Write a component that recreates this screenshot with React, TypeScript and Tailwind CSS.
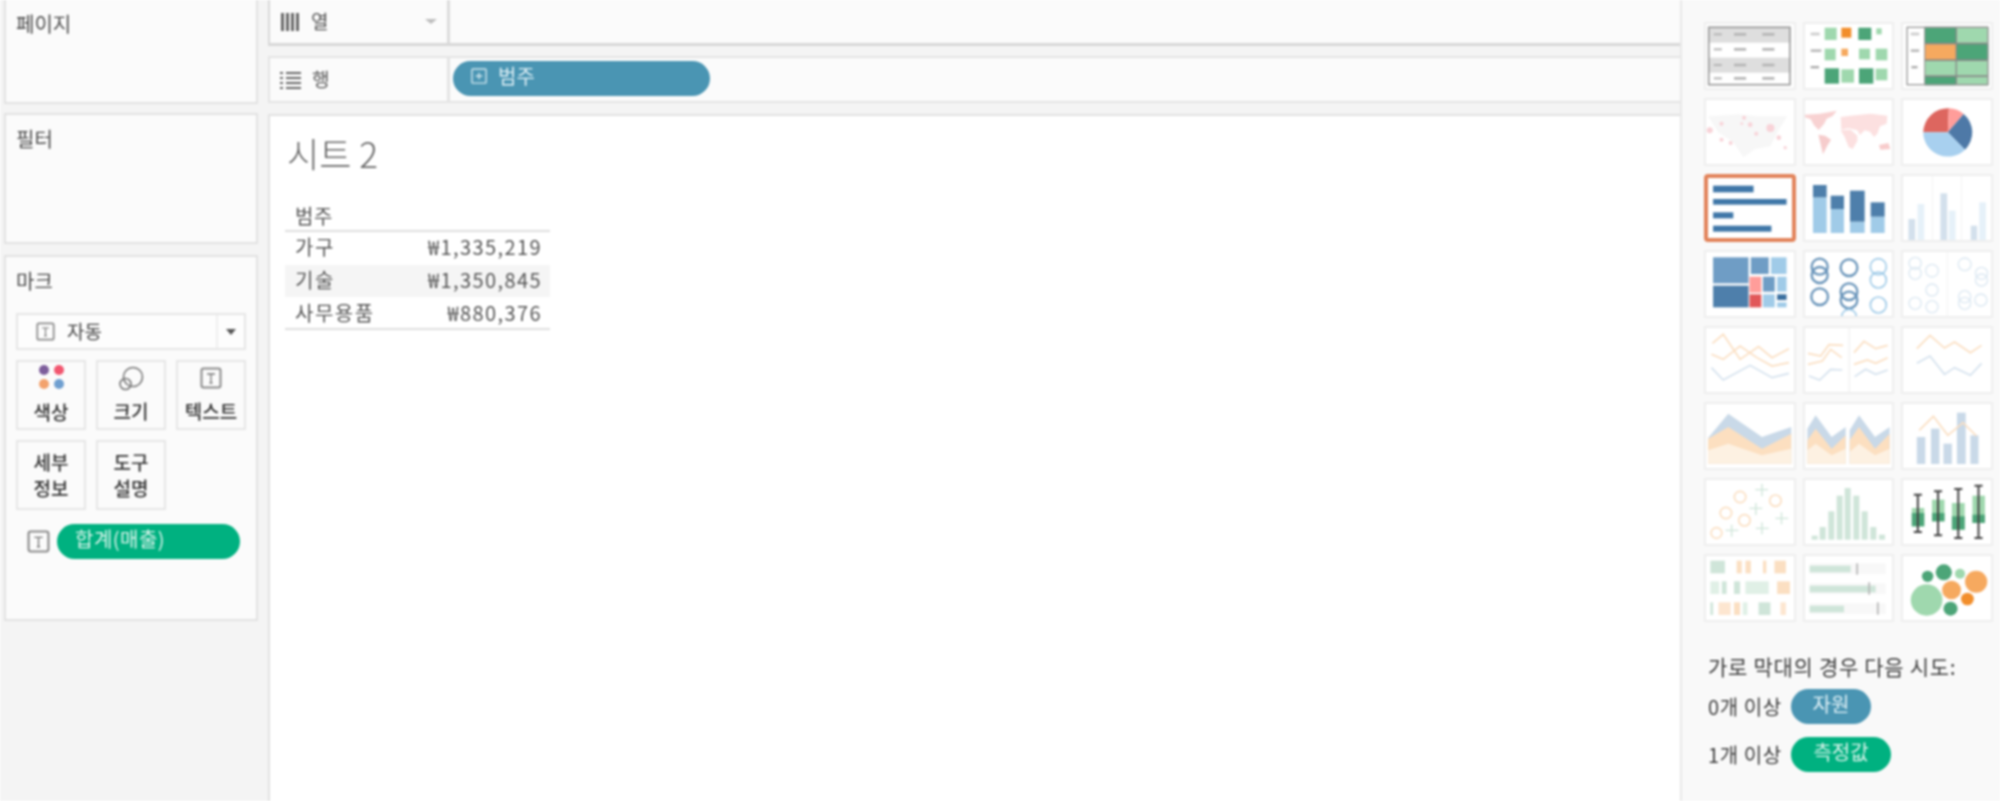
import type { ReactNode } from "react";

const KR = "font-['Noto_Sans_CJK_KR','Noto_Sans',sans-serif]";

function TextIcon({ size = 22 }: { size?: number }) {
  return (
    <svg width={size} height={size} viewBox="0 0 22 22" fill="none">
      <rect x="1.5" y="1.5" width="19" height="19" rx="2" stroke="#8a8a8a" strokeWidth="2" />
      <path d="M7 7h8M11 7v9M9.5 16h3" stroke="#777" strokeWidth="1.3" />
    </svg>
  );
}

function Panel({ title, className, children }: { title: string; className: string; children?: ReactNode }) {
  return (
    <div className={`ml-[4px] mr-[10px] border-2 border-[#e2e2e2] bg-[#fbfbfb] ${className}`}>
      <div className="pl-[10px] text-[20px] leading-[24px] text-[#4a4a4a]">{title}</div>
      {children}
    </div>
  );
}

function MarkButton({ children }: { children: ReactNode }) {
  return (
    <div className="flex h-[70px] w-[70px] flex-col items-center justify-center whitespace-nowrap border-2 border-[#e6e6e6] bg-[#fbfbfb] text-center text-[19px] font-medium leading-[26px] text-[#333]">
      {children}
    </div>
  );
}

function Thumb({ left, top, selected, children }: { left: number; top: number; selected?: boolean; children: ReactNode }) {
  return (
    <div className={`h-[68px] overflow-hidden bg-white ${selected ? "rounded-[4px] outline-4 -outline-offset-4 outline-[#e2835a]" : "outline-2 -outline-offset-2 outline-[#eeeeee]"}`}>
      <svg className="block h-full w-full" viewBox={`${left} ${top} 273 204`} preserveAspectRatio="none">
        {children}
      </svg>
    </div>
  );
}

// rect from corner coordinates
function R({ b, f, o }: { b: [number, number, number, number]; f: string; o?: number }) {
  return <rect x={b[0]} y={b[1]} width={b[2] - b[0]} height={b[3] - b[1]} fill={f} opacity={o} />;
}

function Rings({ items, stroke, w = 5 }: { items: [number, number, number][]; stroke: string; w?: number }) {
  return (
    <g fill="none" stroke={stroke} strokeWidth={w}>
      {items.map(([x, y, r], i) => (
        <circle key={i} cx={x} cy={y} r={r} />
      ))}
    </g>
  );
}

function Line({ p, c, w = 5 }: { p: string; c: string; w?: number }) {
  return <polyline points={p} fill="none" stroke={c} strokeWidth={w} />;
}

const DARK = "#4ca578";
const MID = "#9fd8ae";
const ORANGE = "#f6a95f";
const BLUE = "#4e7fab";
const LBLUE = "#a0cbe8";
const FADE_O = "#fbdfc2";
const FADE_B = "#d5e2ee";
const FADE_G = "#cfe5d9";

function Thumbnails() {
  return (
    <div className="grid grid-cols-[92px_91px_92px] gap-x-[7px] gap-y-[8px]">
      <Thumb left={133} top={68}>
        <R b={[145, 82, 390, 258]} f="#fff" />
        <R b={[145, 82, 390, 130]} f="#dedede" />
        <R b={[145, 175, 390, 220]} f="#dedede" />
        <rect x="147" y="84" width="241" height="172" fill="none" stroke="#9a9a9a" strokeWidth="5" />
        {[105, 150, 197, 237].map((y) => (
          <g key={y} fill="#b5b5b5">
            <rect x="162" y={y - 3} width="24" height="6" />
            <rect x="222" y={y - 4} width="36" height="8" />
            <rect x="306" y={y - 4} width="36" height="8" />
          </g>
        ))}
      </Thumb>
      <Thumb left={432} top={68}>
        <R b={[455, 100, 482, 108]} f="#ccc" />
        <R b={[455, 150, 487, 158]} f="#bbb" />
        <R b={[455, 200, 480, 207]} f="#aaa" />
        <R b={[497, 85, 533, 122]} f={MID} />
        <R b={[547, 85, 577, 115]} f="#f28e2b" />
        <R b={[598, 85, 637, 122]} f={DARK} />
        <R b={[652, 87, 668, 105]} f={MID} />
        <R b={[497, 148, 530, 183]} f={MID} />
        <R b={[547, 148, 567, 170]} f={ORANGE} />
        <R b={[600, 148, 633, 180]} f={MID} />
        <R b={[650, 148, 685, 183]} f={MID} />
        <R b={[497, 207, 540, 253]} f={DARK} />
        <R b={[547, 210, 585, 250]} f={MID} />
        <R b={[600, 207, 643, 253]} f={DARK} />
        <R b={[650, 208, 685, 243]} f={MID} />
      </Thumb>
      <Thumb left={726} top={68}>
        <R b={[742, 82, 795, 258]} f="#fff" />
        <R b={[795, 82, 985, 258]} f="#888" />
        <R b={[798, 85, 888, 130]} f={DARK} />
        <R b={[892, 85, 985, 130]} f={MID} />
        <R b={[798, 135, 888, 180]} f={ORANGE} />
        <R b={[892, 135, 985, 180]} f={DARK} />
        <R b={[798, 185, 888, 228]} f={MID} />
        <R b={[892, 185, 985, 228]} f={MID} />
        <R b={[798, 233, 888, 258]} f={DARK} />
        <R b={[892, 233, 985, 258]} f={MID} />
        <rect x="744" y="84" width="240" height="172" fill="none" stroke="#999" strokeWidth="4" />
        <R b={[755, 100, 780, 108]} f="#ccc" />
        <R b={[755, 150, 780, 158]} f="#bbb" />
        <R b={[757, 200, 775, 207]} f="#aaa" />
      </Thumb>

      <Thumb left={133} top={295}>
        <path d="M145 350l90-6 60 6 85 0-25 40-25 50-45 8-35 25-30-45-45-30z" fill="#f7f7f7" />
        <g fill="#f8d3d8">
          <circle cx="150" cy="392" r="9" />
          <circle cx="185" cy="372" r="6" />
          <circle cx="252" cy="354" r="6" />
          <circle cx="245" cy="372" r="4" />
          <circle cx="270" cy="375" r="7" />
          <circle cx="330" cy="385" r="12" />
          <circle cx="288" cy="402" r="6" />
          <circle cx="355" cy="414" r="7" />
          <circle cx="185" cy="420" r="6" />
          <circle cx="212" cy="430" r="6" />
          <circle cx="374" cy="444" r="5" />
        </g>
      </Thumb>
      <Thumb left={432} top={295}>
        <g fill="#fce0e0">
          <path d="M438 345l45-3 30-5 20-4-12 16-18 8-8 16-16 18-14-14-10-18-17-6z" fill="#f8d2d2" />
          <path d="M478 405l20 3 18 12-12 20-12 24-7-30z" fill="#f6cccc" />
          <path d="M545 352l30-4 60-6 50 6-2 24-20 8-8 22-10 10-12-16-16-4-14 14-8-14-26-6-22 4z" />
          <path d="M545 392l30-2 20 18 0 16-14 24-12-6-12-30z" />
          <path d="M660 436l28-6 6 18-30 2z" fill="#f8cccc" />
        </g>
      </Thumb>
      <Thumb left={726} top={295}>
        <path d="M865 398L792 398A73 73 0 0 1 868 326Z" fill="#dd665f" />
        <path d="M865 398L868 326A73 73 0 0 1 912 343Z" fill="#ff9d9a" />
        <path d="M865 398L912 343A73 73 0 0 1 916 450Z" fill="#4e79a7" />
        <path d="M865 398L916 450A73 73 0 0 1 792 398Z" fill="#a8d0ef" />
      </Thumb>

      <Thumb selected left={133} top={520}>
        <R b={[160, 555, 280, 575]} f="#3f77a8" />
        <R b={[160, 595, 378, 612]} f="#3f77a8" />
        <R b={[160, 635, 220, 653]} f="#3f77a8" />
        <R b={[160, 675, 333, 693]} f="#3f77a8" />
      </Thumb>
      <Thumb left={432} top={520}>
        <R b={[462, 590, 503, 697]} f={LBLUE} />
        <R b={[462, 553, 503, 590]} f={BLUE} />
        <R b={[515, 625, 555, 697]} f={LBLUE} />
        <R b={[515, 585, 555, 625]} f={BLUE} />
        <R b={[573, 663, 617, 697]} f={LBLUE} />
        <R b={[573, 570, 617, 663]} f={BLUE} />
        <R b={[635, 648, 677, 697]} f={LBLUE} />
        <R b={[635, 605, 677, 648]} f={BLUE} />
      </Thumb>
      <Thumb left={726} top={520}>
        <R b={[819, 520, 821, 725]} f="#eee" />
        <R b={[904, 520, 906, 725]} f="#eee" />
        <R b={[748, 655, 768, 725]} f="#d3e0ec" />
        <R b={[775, 610, 795, 725]} f="#e6f1f9" />
        <R b={[843, 578, 863, 725]} f="#d3e0ec" />
        <R b={[868, 630, 888, 725]} f="#e6f1f9" />
        <R b={[933, 675, 952, 725]} f="#d3e0ec" />
        <R b={[958, 605, 978, 725]} f="#e6f1f9" />
      </Thumb>

      <Thumb left={133} top={35}>
        <R b={[160, 57, 265, 135]} f="#6f9dc5" />
        <R b={[160, 142, 265, 207]} f="#4e7fab" />
        <R b={[272, 57, 325, 107]} f="#6f9dc5" />
        <R b={[332, 57, 378, 107]} f={LBLUE} />
        <R b={[268, 115, 303, 163]} f="#ff9d9a" />
        <R b={[308, 115, 343, 160]} f="#6f9dc5" />
        <R b={[350, 115, 378, 160]} f={LBLUE} />
        <R b={[268, 168, 303, 207]} f="#e15759" />
        <R b={[308, 168, 343, 207]} f={LBLUE} />
        <R b={[350, 168, 378, 185]} f="#3a6f9f" />
        <R b={[350, 192, 378, 207]} f={LBLUE} />
      </Thumb>
      <Thumb left={432} top={35}>
        <Rings stroke="#6a95ba" w={7} items={[[482, 85, 24], [482, 110, 24], [570, 88, 25], [482, 175, 25], [570, 160, 25], [570, 185, 25]]} />
        <Rings stroke={LBLUE} w={5} items={[[658, 85, 24], [658, 125, 24], [658, 200, 24], [570, 235, 22]]} />
      </Thumb>
      <Thumb left={726} top={35}>
        <R b={[862, 35, 864, 235]} f="#eee" />
        <Rings stroke="#dce8f2" w={4} items={[[768, 75, 18], [768, 105, 18], [818, 97, 19], [768, 195, 18], [818, 155, 18], [818, 205, 18], [915, 78, 19], [965, 105, 18], [965, 125, 18], [915, 175, 18], [915, 195, 18], [963, 185, 18]]} />
      </Thumb>

      <Thumb left={133} top={260}>
        <Line c={FADE_O} p="158,312 190,285 240,360 295,322 335,355 385,328" />
        <Line c={FADE_O} p="155,345 190,360 240,320 290,355 335,380 385,370" />
        <Line c={FADE_B} p="155,385 190,422 270,378 335,415 385,402" />
      </Thumb>
      <Thumb left={432} top={260}>
        <R b={[569, 260, 572, 464]} f="#eee" />
        <Line c={FADE_O} p="447,342 485,350 510,316 552,318" />
        <Line c={FADE_O} p="447,375 490,365 515,330 548,355" />
        <Line c={FADE_B} p="450,410 482,422 515,390 550,392" />
        <Line c={FADE_O} p="585,340 615,306 650,328 686,318" />
        <Line c={FADE_O} p="585,375 625,362 650,372 686,355" />
        <Line c={FADE_B} p="587,412 620,390 650,405 686,392" />
      </Thumb>
      <Thumb left={726} top={260}>
        <Line c={FADE_O} p="773,328 812,288 855,326 885,308 932,340 965,318" />
        <Line c={FADE_B} p="773,372 812,350 855,405 885,385 932,408 965,372" />
      </Thumb>

      <Thumb left={133} top={490}>
        <path d="M145 598L205 525L305 595L392 565V675H145Z" fill="#c9d9e8" />
        <path d="M145 600L205 565L305 630L392 585V675H145Z" fill="#fcdfc0" />
        <path d="M145 635L205 615L305 650L392 630V675H145Z" fill="#fdf1e2" />
      </Thumb>
      <Thumb left={432} top={490}>
        <path d="M445 570L470 530L518 595L560 565V675H445Z" fill="#c9d9e8" />
        <path d="M445 605L470 570L518 630L560 590V675H445Z" fill="#fcdfc0" />
        <path d="M445 635L470 615L518 650L560 630V675H445Z" fill="#fdf1e2" />
        <path d="M572 575L600 530L648 595L692 565V675H572Z" fill="#c9d9e8" />
        <path d="M572 605L600 565L648 630L692 585V675H572Z" fill="#fcdfc0" />
        <path d="M572 640L600 615L648 650L692 630V675H572Z" fill="#fdf1e2" />
      </Thumb>
      <Thumb left={726} top={490}>
        <R b={[773, 595, 798, 676]} f="#c9d9e8" />
        <R b={[815, 570, 840, 676]} f="#c9d9e8" />
        <R b={[852, 615, 877, 676]} f="#c9d9e8" />
        <R b={[892, 522, 918, 676]} f="#c9d9e8" />
        <R b={[932, 590, 956, 676]} f="#c9d9e8" />
        <Line c={FADE_O} p="780,575 822,533 865,590 910,552 950,592" />
      </Thumb>

      <Thumb left={133} top={25}>
        <Rings stroke={FADE_O} w={5} items={[[240, 82, 17], [345, 93, 17], [198, 130, 17], [253, 152, 17], [170, 190, 16]]} />
        <path d="M305 42v38M285 60h38M287 100v36M268 116h38M363 128v36M345 146h38M215 165v36M197 182h38M305 158v36M287 176h38" stroke={FADE_G} strokeWidth="4" />
      </Thumb>
      <Thumb left={432} top={25}>
        {[[458, 198], [482, 172], [508, 125], [533, 78], [557, 55], [583, 78], [608, 125], [634, 172], [660, 195]].map(([x, y]) => (
          <R key={x} b={[x, y, x + 18, 210]} f={FADE_G} />
        ))}
      </Thumb>
      <Thumb left={726} top={25}>
        <R b={[758, 115, 795, 170]} f={MID} />
        <R b={[758, 130, 795, 170]} f={DARK} />
        <R b={[818, 90, 855, 155]} f={MID} />
        <R b={[818, 130, 855, 155]} f={DARK} />
        <R b={[877, 100, 915, 180]} f={MID} />
        <R b={[877, 140, 915, 180]} f={DARK} />
        <R b={[938, 78, 975, 160]} f={MID} />
        <R b={[938, 135, 975, 160]} f={DARK} />
        <path d="M776 75v112M764 75h24M764 187h24M836 65v132M824 65h24M824 197h24M896 58v147M884 58h24M884 205h24M956 48v157M944 48h24M944 205h24" stroke="#444" strokeWidth="6" fill="none" />
      </Thumb>

      <Thumb left={133} top={250}>
        {[[152, 270, 195, 308, FADE_G], [230, 270, 245, 308, FADE_O], [256, 270, 272, 308, FADE_O], [308, 270, 318, 308, FADE_O], [342, 270, 376, 308, FADE_O],
          [152, 332, 178, 370, "#e0f0e6"], [186, 332, 200, 370, FADE_G], [222, 332, 240, 370, FADE_G], [256, 332, 325, 370, "#e0f0e6"], [350, 332, 388, 370, FADE_O],
          [152, 395, 160, 433, FADE_G], [176, 395, 212, 433, "#fde6d0"], [222, 395, 240, 433, FADE_O], [248, 395, 262, 433, "#e0f0e6"], [295, 395, 330, 433, FADE_G], [360, 395, 376, 433, "#fde6d0"]
        ].map((r, i) => (
          <R key={i} b={[r[0] as number, r[1] as number, r[2] as number, r[3] as number]} f={r[4] as string} />
        ))}
      </Thumb>
      <Thumb left={432} top={250}>
        <R b={[452, 278, 680, 310]} f="#f8f8f8" />
        <R b={[452, 338, 680, 370]} f="#f8f8f8" />
        <R b={[452, 398, 680, 430]} f="#f8f8f8" />
        <R b={[452, 285, 575, 305]} f={FADE_G} />
        <R b={[452, 345, 650, 365]} f={FADE_G} />
        <R b={[452, 405, 555, 425]} f={FADE_G} />
        <R b={[592, 278, 597, 312]} f="#b5b5b5" />
        <R b={[628, 335, 633, 372]} f="#b5b5b5" />
        <R b={[654, 395, 659, 432]} f="#b5b5b5" />
      </Thumb>
      <Thumb left={726} top={250}>
        <circle cx="802" cy="388" r="47" fill={MID} />
        <circle cx="805" cy="317" r="17" fill={DARK} />
        <circle cx="853" cy="305" r="24" fill={DARK} />
        <circle cx="901" cy="309" r="15" fill={MID} />
        <circle cx="876" cy="358" r="28" fill={ORANGE} />
        <circle cx="949" cy="333" r="33" fill={ORANGE} />
        <circle cx="923" cy="385" r="19" fill="#f28e2b" />
        <circle cx="873" cy="414" r="21" fill={DARK} />
      </Thumb>
    </div>
  );
}

export default function App() {
  return (
    <div className={`${KR} flex h-[801px] w-[2000px] overflow-hidden bg-[#f4f4f4] blur-[0.9px]`}>
      {/* left cards */}
      <div className="flex w-[268px] flex-col">
        <Panel title="페이지" className="h-[104px] border-t-0 pt-[12px]" />
        <Panel title="필터" className="mt-[9px] h-[131px] pt-[12px]" />
        <Panel title="마크" className="mt-[11px] h-[366px] pt-[12px]">
          <div className="ml-[10px] mt-[20px] flex h-[37px] w-[230px] items-center border-2 border-[#e6e6e6] bg-[#fdfdfd]">
            <div className="ml-[18px]">
              <TextIcon size={19} />
            </div>
            <span className="ml-[12px] flex-1 text-[19px] text-[#444]">자동</span>
            <div className="flex h-full w-[28px] items-center justify-center border-l-2 border-[#efefef]">
              <div className="h-0 w-0 border-x-[5px] border-t-[6px] border-x-transparent border-t-[#555]" />
            </div>
          </div>
          <div className="ml-[10px] mt-[10px] grid w-[230px] grid-cols-[70px_70px_70px] gap-x-[10px] gap-y-[10px]">
            <MarkButton>
              <div className="grid grid-cols-[10px_10px] gap-x-[5px] gap-y-[4px]">
                <div className="h-[10px] w-[10px] rounded-full bg-[#7d5d9b]" />
                <div className="h-[10px] w-[10px] rounded-full bg-[#f2566f]" />
                <div className="h-[10px] w-[10px] rounded-full bg-[#f3a26d]" />
                <div className="h-[10px] w-[10px] rounded-full bg-[#6f9fd0]" />
              </div>
              <span className="mt-[10px]">색상</span>
            </MarkButton>
            <MarkButton>
              <svg width="26" height="26" viewBox="0 0 26 26" fill="none" stroke="#777" strokeWidth="1.6">
                <circle cx="15" cy="11" r="9.5" />
                <circle cx="7.5" cy="18" r="5.5" />
              </svg>
              <span className="mt-[6px]">크기</span>
            </MarkButton>
            <MarkButton>
              <TextIcon />
              <span className="mt-[9px]">텍스트</span>
            </MarkButton>
            <MarkButton>
              <span>세부</span>
              <span>정보</span>
            </MarkButton>
            <MarkButton>
              <span>도구</span>
              <span>설명</span>
            </MarkButton>
          </div>
          <div className="ml-[21px] mt-[14px] flex items-center gap-[7px]">
            <TextIcon size={23} />
            <div className="h-[35px] w-[183px] rounded-full bg-[#00b180] pl-[18px] text-[20px] leading-[29px] tracking-[0.5px] text-[#d8f3ea]">
              합계(매출)
            </div>
          </div>
        </Panel>
      </div>

      {/* shelves and view */}
      <div className="flex flex-1 flex-col">
        <div className="flex h-[46px] border-x-2 border-b-[3px] border-[#d8d8d8] border-r-0 bg-[#fbfbfb]">
          <div className="flex w-[180px] items-center border-r-[3px] border-[#dcdcdc] pl-[10px]">
            <svg width="20" height="20" viewBox="0 0 20 20" fill="#666">
              <rect x="1" y="1" width="3" height="18" />
              <rect x="6" y="1" width="3" height="18" />
              <rect x="11" y="1" width="3" height="18" />
              <rect x="16" y="1" width="3" height="18" />
            </svg>
            <span className="ml-[11px] text-[19px] text-[#555]">열</span>
            <div className="ml-auto mr-[10px] h-0 w-0 border-x-[6px] border-t-[5px] border-x-transparent border-t-[#bdbdbd]" />
          </div>
        </div>
        <div className="mt-[10px] flex h-[47px] border-2 border-r-0 border-[#e4e4e4] bg-[#fbfbfb]">
          <div className="flex w-[180px] items-center border-r-[3px] border-[#e4e4e4] pl-[10px]">
            <svg width="21" height="18" viewBox="0 0 21 18" stroke="#666" strokeWidth="2">
              <path d="M0 2h3M6 2h15M0 7h3M6 7h15M0 12h3M6 12h15M0 17h3M6 17h15" />
            </svg>
            <span className="ml-[11px] text-[19px] text-[#555]">행</span>
          </div>
          <div className="ml-[3px] mt-[3px] flex h-[35px] w-[257px] items-start rounded-full bg-[#4a95b3] pl-[18px] text-[20px] leading-[29px] text-[#dff0f6]">
            <svg className="mt-[7px]" width="17" height="17" viewBox="0 0 18 18" fill="none" stroke="#cfe6ee" strokeWidth="1.5">
              <rect x="1" y="1" width="15" height="15" rx="1" />
              <path d="M5 8.5h7M8.5 5v7" />
            </svg>
            <span className="ml-[10px]">범주</span>
          </div>
        </div>
        <div className="mt-[11px] flex-1 border-l-2 border-t-2 border-[#e2e2e2] bg-white pl-[15px] pt-[15px]">
          <div className="pl-[2px] text-[35px] font-light leading-[44px] text-[#666]">시트 2</div>
          <div className="mt-[27px] w-[265px] text-[20px] text-[#555]">
            <div className="h-[30px] border-b-2 border-[#dedede] pl-[10px] pt-[2px] leading-[24px] tracking-[0.5px]">범주</div>
            <div className="flex h-[33px] items-center justify-between whitespace-nowrap pb-[3px] pl-[10px] pr-[8px]">
              <span className="tracking-[1.5px]">가구</span>
              <span className="tracking-[1.4px]">₩1,335,219</span>
            </div>
            <div className="flex h-[32px] items-center justify-between whitespace-nowrap bg-[#f5f5f5] pb-[3px] pl-[10px] pr-[8px]">
              <span className="tracking-[1.5px]">기술</span>
              <span className="tracking-[1.4px]">₩1,350,845</span>
            </div>
            <div className="flex h-[33px] items-center justify-between whitespace-nowrap border-b-2 border-[#dedede] pl-[10px] pr-[8px]">
              <span className="tracking-[1.5px]">사무용품</span>
              <span className="tracking-[1.4px]">₩880,376</span>
            </div>
          </div>
        </div>
      </div>

      {/* show me */}
      <div className="w-[320px] border-l-2 border-[#e8e8e8] bg-[#f9f9f9] pl-[22px] pt-[22px]">
        <Thumbnails />
        <div className="ml-[4px] mt-[32px] whitespace-nowrap text-[21px] leading-[24px] tracking-[0.7px] text-[#3d3d3d]">가로 막대의 경우 다음 시도:</div>
        <div className="ml-[4px] mt-[11px] flex h-[35px] items-center text-[20px] text-[#3d3d3d]">
          <span className="w-[83px] whitespace-nowrap tracking-[0.6px]">0개 이상</span>
          <div className="h-[35px] w-[80px] rounded-full bg-[#4a95b3] text-center leading-[29px] text-[#dff0f6]">자원</div>
        </div>
        <div className="ml-[4px] mt-[13px] flex h-[35px] items-center text-[20px] text-[#3d3d3d]">
          <span className="w-[83px] whitespace-nowrap tracking-[0.6px]">1개 이상</span>
          <div className="h-[35px] w-[100px] rounded-full bg-[#00b180] text-center leading-[29px] text-[#d8f3ea]">측정값</div>
        </div>
      </div>
    </div>
  );
}
